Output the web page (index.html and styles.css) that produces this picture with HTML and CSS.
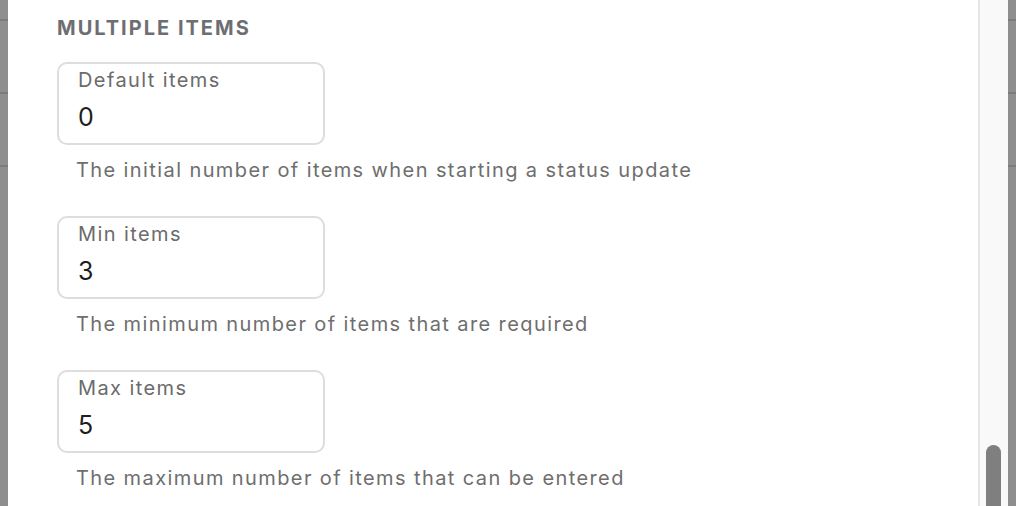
FILE: index.html
```html
<!DOCTYPE html>
<html lang="en">

<head>
    <meta charset="UTF-8">
    <title>Multiple items</title>
    <link rel="stylesheet" href="styles.css">
</head>

<body>
    <div class="backdrop left">
        <div class="rule"></div>
        <div class="rule"></div>
        <div class="rule"></div>
    </div>

    <div class="panel">
        <h2 class="section-title">MULTIPLE ITEMS</h2>

        <div class="field">
            <label class="box">
                <span class="box-label">Default items</span>
                <span class="box-value">0</span>
            </label>
            <p class="hint">The initial number of items when starting a status update</p>
        </div>

        <div class="field">
            <label class="box">
                <span class="box-label">Min items</span>
                <span class="box-value">3</span>
            </label>
            <p class="hint">The minimum number of items that are required</p>
        </div>

        <div class="field">
            <label class="box">
                <span class="box-label">Max items</span>
                <span class="box-value">5</span>
            </label>
            <p class="hint">The maximum number of items that can be entered</p>
        </div>
    </div>

    <div class="scroll-track">
        <div class="scroll-thumb"></div>
    </div>

    <div class="backdrop right">
        <div class="rule"></div>
        <div class="rule"></div>
        <div class="rule"></div>
    </div>
</body>

</html>
```

FILE: styles.css
```css
html,
body {
    margin: 0;
    height: 100%;
    overflow: hidden;
}

body {
    display: flex;
    font-family: Inter, "Noto Sans", sans-serif;
    background: #ffffff;
}

/* grey page behind the sheet */
.backdrop {
    width: 8px;
    flex: none;
    background: #8e8e8e;
    padding-top: 19px;
    box-sizing: border-box;
}

.backdrop .rule {
    height: 2px;
    background: #7b7b7b;
    margin-bottom: 71px;
}

.panel {
    flex: 1;
    padding: 16px 0 0 49px;
    border-right: 2px solid #e6e6e6;
}

.section-title {
    margin: 0 0 22px;
    font-size: 20px;
    line-height: 24px;
    font-weight: 700;
    color: #6e6e72;
    letter-spacing: 2px;
}

.field {
    margin-bottom: 34px;
}

.box {
    display: flex;
    flex-direction: column;
    width: 268px;
    height: 83px;
    box-sizing: border-box;
    border: 2px solid #dddddd;
    border-radius: 10px;
    padding: 4px 19px 0;
}

.box-label {
    font-size: 20px;
    line-height: 24px;
    letter-spacing: 1.4px;
    color: #6b6b6b;
}

.box-value {
    font-size: 25px;
    line-height: 30px;
    margin-top: 10px;
    color: #1e1e1e;
}

.hint {
    margin: 13px 0 0 19px;
    font-size: 20px;
    line-height: 24px;
    letter-spacing: 1.4px;
    color: #6e6e6e;
}

.scroll-track {
    width: 28px;
    flex: none;
    background: #f9f9f9;
    position: relative;
}

.scroll-thumb {
    position: absolute;
    left: 6px;
    top: 445px;
    width: 15px;
    height: 80px;
    border-radius: 8px;
    background: #7f7f7f;
}
```
